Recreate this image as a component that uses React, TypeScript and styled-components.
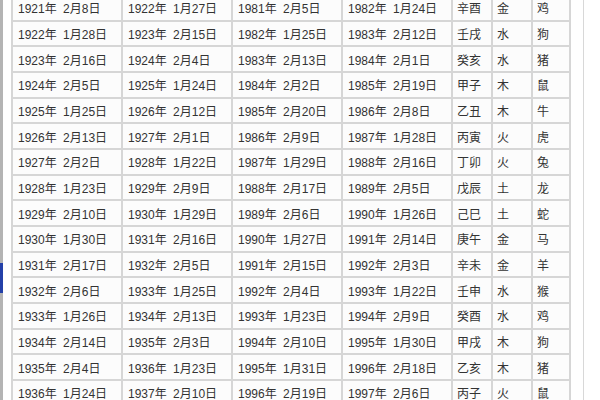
import styled, { createGlobalStyle } from 'styled-components';

type Row = [string, string, string, string, string, string, string];

const rows: Row[] = [
  ['1921年 2月8日', '1922年 1月27日', '1981年 2月5日', '1982年 1月24日', '辛酉', '金', '鸡'],
  ['1922年 1月28日', '1923年 2月15日', '1982年 1月25日', '1983年 2月12日', '壬戌', '水', '狗'],
  ['1923年 2月16日', '1924年 2月4日', '1983年 2月13日', '1984年 2月1日', '癸亥', '水', '猪'],
  ['1924年 2月5日', '1925年 1月24日', '1984年 2月2日', '1985年 2月19日', '甲子', '木', '鼠'],
  ['1925年 1月25日', '1926年 2月12日', '1985年 2月20日', '1986年 2月8日', '乙丑', '木', '牛'],
  ['1926年 2月13日', '1927年 2月1日', '1986年 2月9日', '1987年 1月28日', '丙寅', '火', '虎'],
  ['1927年 2月2日', '1928年 1月22日', '1987年 1月29日', '1988年 2月16日', '丁卯', '火', '兔'],
  ['1928年 1月23日', '1929年 2月9日', '1988年 2月17日', '1989年 2月5日', '戊辰', '土', '龙'],
  ['1929年 2月10日', '1930年 1月29日', '1989年 2月6日', '1990年 1月26日', '己巳', '土', '蛇'],
  ['1930年 1月30日', '1931年 2月16日', '1990年 1月27日', '1991年 2月14日', '庚午', '金', '马'],
  ['1931年 2月17日', '1932年 2月5日', '1991年 2月15日', '1992年 2月3日', '辛未', '金', '羊'],
  ['1932年 2月6日', '1933年 1月25日', '1992年 2月4日', '1993年 1月22日', '壬申', '水', '猴'],
  ['1933年 1月26日', '1934年 2月13日', '1993年 1月23日', '1994年 2月9日', '癸酉', '水', '鸡'],
  ['1934年 2月14日', '1935年 2月3日', '1994年 2月10日', '1995年 1月30日', '甲戌', '木', '狗'],
  ['1935年 2月4日', '1936年 1月23日', '1995年 1月31日', '1996年 2月18日', '乙亥', '木', '猪'],
  ['1936年 1月24日', '1937年 2月10日', '1996年 2月19日', '1997年 2月6日', '丙子', '火', '鼠'],
];

export default function App() {
  return (
    <Page>
      <GlobalStyle />
      <SideBar>
        <SideTrack $grow={263} />
        <SideThumb />
        <SideTrack $grow={107} />
      </SideBar>
      <TableWrap>
        <Grid>
          {rows.map((row) => row.map((text, i) => (
            <Cell key={`${row[0]}-${i}`} $narrow={i >= 4}>{text}</Cell>
          )))}
        </Grid>
      </TableWrap>
      <RightMargin />
    </Page>
  );
}

const GlobalStyle = createGlobalStyle`
  html, body {
    margin: 0;
    padding: 0;
    background: #ffffff;
    overflow: hidden;
  }
`;

const Page = styled.div`
  display: flex;
  width: 600px;
  height: 400px;
  overflow: hidden;
  background: #ffffff;
`;

const SideBar = styled.div`
  display: flex;
  flex-direction: column;
  width: 3px;
  height: 400px;
  margin-right: 8px;
`;

const SideTrack = styled.div<{ $grow: number }>`
  flex: ${({ $grow }) => $grow} 0 0;
  background: #b4b4b4;
`;

const SideThumb = styled.div`
  height: 30px;
  background: #2440a8;
`;

const TableWrap = styled.div`
  width: 560px;
  height: 400px;
  overflow: hidden;
`;

const Grid = styled.div`
  display: grid;
  grid-template-columns: 108px 108px 108px 108px 38px 38px 36px;
  grid-auto-rows: 23.67px;
  gap: 2px;
  padding: 2px;
  margin-top: -6px;
  width: max-content;
  background: #d6d6d6;
`;

const Cell = styled.div<{ $narrow: boolean }>`
  display: flex;
  align-items: center;
  padding-left: ${({ $narrow }) => ($narrow ? '4px' : '5px')};
  background: #fcfcfc;
  font-family: "Liberation Sans", "Noto Sans CJK SC", sans-serif;
  font-size: 12px;
  color: #333333;
  white-space: pre;
  word-spacing: 3px;
  overflow: hidden;
`;

const RightMargin = styled.div`
  width: 12px;
  height: 400px;
  margin-left: 0;
  border-right: 1px solid #d8d8d8;
`;
